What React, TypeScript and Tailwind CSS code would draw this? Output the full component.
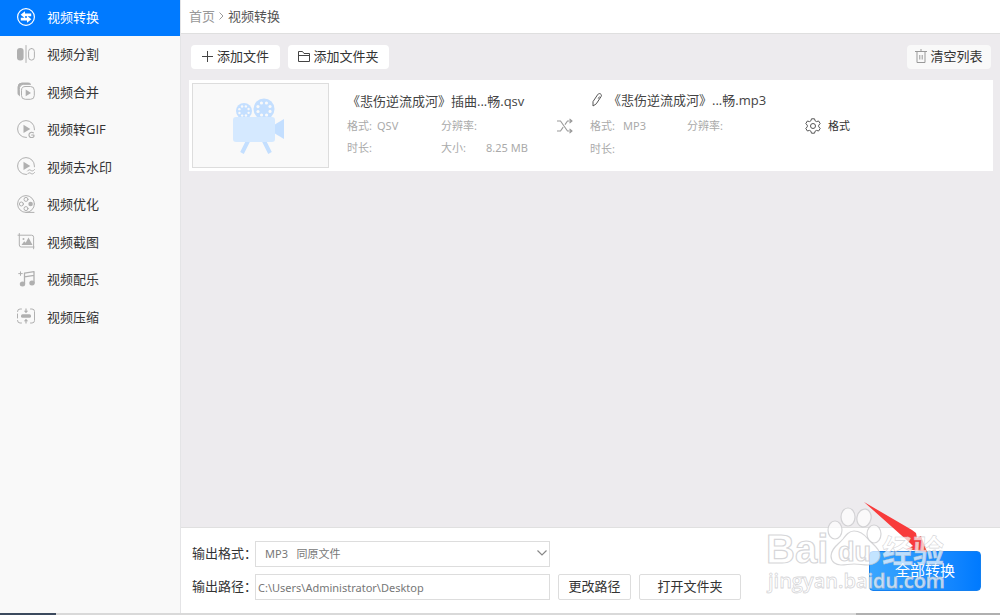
import { useState, type ReactNode } from "react";

// Sidebar glyphs share one 18x18 box and inherit the text colour.
function Glyph({ children }: { children: ReactNode }) {
  return (
    <svg
      viewBox="0 0 18 18"
      className="mb-0.5 size-[18px] shrink-0"
      fill="none"
      stroke="currentColor"
      strokeWidth="1"
      strokeLinecap="round"
      strokeLinejoin="round"
      aria-hidden="true"
    >
      {children}
    </svg>
  );
}

const CLIP = "M9.5 17.4H9A8.4 8.4 0 1 1 17.4 9v.8";

const MENU: { label: string; icon: ReactNode }[] = [
  {
    label: "视频转换",
    icon: (
      <Glyph>
        <circle cx="9" cy="9" r="8.4" strokeWidth="1.2" />
        <path d="M14.200 8.200V5.600H8V3.300L3.600 6.800 8 10.200V8.200zM3.800 9.800v2.600H10v2.300l4.400-3.500L10 7.800v2z" fill="currentColor" stroke="none" />
      </Glyph>
    ),
  },
  {
    label: "视频分割",
    icon: (
      <Glyph>
        <rect x="0" y="3" width="6.6" height="12.6" rx="3" fill="currentColor" stroke="none" />
        <path d="M9 .5v17" />
        <rect x="11.6" y="3.5" width="5.8" height="11.6" rx="2.9" />
      </Glyph>
    ),
  },
  {
    label: "视频合并",
    icon: (
      <Glyph>
        <path d="M2.200 13.500C1.300 12.800 1 12 1 11V5a4 4 0 0 1 4-4h6c1.200 0 2 .4 2.700 1.300H6.800A4.500 4.500 0 0 0 2.300 6.800z" fill="currentColor" />
        <rect x="4.500" y="4.500" width="12.800" height="12.800" rx="3.800" />
        <path d="M8.700 7.500v6.800l5.300-3.400z" fill="currentColor" stroke="none" />
      </Glyph>
    ),
  },
  {
    label: "视频转GIF",
    icon: (
      <Glyph>
        <path d={CLIP} />
        <path d="M6.500 4.800v8.200L13.300 9z" fill="currentColor" stroke="none" />
        <path d="M16.300 12.800a2.700 2.700 0 1 0 .6 3.700v-1.500h-2.200" strokeWidth="1.200" />
      </Glyph>
    ),
  },
  {
    label: "视频去水印",
    icon: (
      <Glyph>
        <path d={CLIP} />
        <path d="M6.500 4.800v8.200L13.300 9z" fill="currentColor" stroke="none" />
        <path d="M10.500 14c1.200-1.600 2.300-1.400 3.400-.6s2.200.8 3.600-.8M10.500 17c1.200-1.600 2.300-1.400 3.400-.6s2.200.8 3.600-.8" />
      </Glyph>
    ),
  },
  {
    label: "视频优化",
    icon: (
      <Glyph>
        <circle cx="9" cy="9" r="8.400" />
        <circle cx="9" cy="4.400" r="2" />
        <circle cx="4.400" cy="9" r="2" />
        <circle cx="9" cy="13.600" r="2" />
        <circle cx="13.600" cy="9" r="2.300" fill="currentColor" stroke="none" />
        <path d="M9 17.400h8" />
      </Glyph>
    ),
  },
  {
    label: "视频截图",
    icon: (
      <Glyph>
        <path d="M1 3.200h13.600a2 2 0 0 1 2 2v11.600M2.300 1.500v11.500a2 2 0 0 0 2 2H17" />
        <path d="M4.500 13l2.700-3.700 1.500 1.400L11.500 5.500l4 7.500z" fill="currentColor" stroke="none" />
        <circle cx="6.500" cy="7" r="1" fill="currentColor" stroke="none" />
      </Glyph>
    ),
  },
  {
    label: "视频配乐",
    icon: (
      <Glyph>
        <path d="M7.500 14V3.200l9.500-1.500V13M7.500 6.800L17 5.300" strokeWidth="1.300" />
        <ellipse cx="5.500" cy="14" rx="2.700" ry="2.500" fill="currentColor" stroke="none" />
        <ellipse cx="15" cy="13" rx="2.700" ry="2.500" fill="currentColor" stroke="none" />
        <path d="M3.500 1.800v3.600M1.700 3.600h3.600" />
      </Glyph>
    ),
  },
  {
    label: "视频压缩",
    icon: (
      <Glyph>
        <path d="M4.500 2H3a2.500 2.500 0 0 0-2.500 2.500M.5 7v4M.5 13.500A2.500 2.500 0 0 0 3 16h1.500M13.500 2H15a2.500 2.500 0 0 1 2.500 2.500v9A2.500 2.500 0 0 1 15 16h-1.500" />
        <rect x="4" y="7.300" width="10" height="3.400" rx="1.500" fill="currentColor" stroke="none" />
        <path d="M8.400 1.500h1.200v2.200h1.600L9 6.200 6.800 3.700h1.600zM8.400 16.500h1.200v-2.200h1.600L9 11.800l-2.200 2.500h1.600z" fill="currentColor" stroke="none" />
      </Glyph>
    ),
  },
];

function Reel({ cx, cy, r }: { cx: number; cy: number; r: number }) {
  return (
    <>
      <circle cx={cx} cy={cy} r={r} fill="#c4dfff" />
      {[0, 45, 90, 135, 180, 225, 270, 315].map((deg) => (
        <circle
          key={deg}
          cx={cx + r * 0.62 * Math.cos(((deg + 22) * Math.PI) / 180)}
          cy={cy + r * 0.62 * Math.sin(((deg + 22) * Math.PI) / 180)}
          r={r * 0.15}
          fill="#f9f9f9"
        />
      ))}
    </>
  );
}

function Camera() {
  return (
    <svg viewBox="0 0 52 56" className="mr-1 h-14 w-[52px]" aria-hidden="true">
      <path d="M15 43L9 55M31 43l6 12" stroke="#c4dfff" strokeWidth="4" />
      <Reel cx={11} cy={13} r={8} />
      <Reel cx={31} cy={11} r={10.5} />
      <path d="M41 27l10-6v20l-10-6z" fill="#c4dfff" />
      <rect x="0" y="19" width="42" height="25" rx="3" fill="#d5e9ff" />
    </svg>
  );
}

function Watermark() {
  return (
    <svg
      viewBox="764 500 190 100"
      className="pointer-events-none absolute right-[46px] bottom-[13px] h-[100px] w-[190px]"
      aria-hidden="true"
    >
      <path d="M864 502L912 530l4 3 1 5 4-2 6 16-21-3 7-3-3-3z" fill="#f83b3b" />
      <g fill="#ffffff" fillOpacity=".7" stroke="#c4c4c8" strokeOpacity=".7" strokeWidth="1.2">
        <ellipse cx="835" cy="530" rx="7" ry="9" />
        <ellipse cx="848" cy="517" rx="7" ry="9" />
        <ellipse cx="864" cy="518" rx="7" ry="9" transform="rotate(12 864 518)" />
        <ellipse cx="874" cy="534" rx="7" ry="9" />
        <path d="M854 531c-5 0-8 4-11 8-4 5-12 9-12 17 0 6 5 9 10 9 5 0 8-1 13-1s9 1 14 1 12-3 12-10c0-7-8-11-12-16s-8-8-14-8z" />
        <g fontFamily="'Liberation Sans', 'Noto Sans CJK SC', sans-serif" fontWeight="700">
          <text x="766" y="563" fontSize="40">Bai</text>
          <text x="838" y="561" fontSize="27">du</text>
          <text x="882" y="562" fontSize="31" strokeWidth=".6">经验</text>
        </g>
        <text x="768" y="588" fontSize="20" fontWeight="600" fontFamily="'Open Sans', sans-serif" strokeWidth=".8">
          jingyan.baidu.com
        </text>
      </g>
    </svg>
  );
}

function MediaRow() {
  return (
    <article className="flex bg-white p-[3px] font-['Noto_Sans','Noto_Sans_CJK_SC',sans-serif] text-[11px] leading-4 text-[#aaa]">
      <div className="flex h-[85px] w-[137px] shrink-0 items-center justify-center border border-[#ddd] bg-[#f9f9f9]">
        <Camera />
      </div>

      <div className="ml-[18px] w-[210px] shrink-0 pt-2">
        <h2 className="font-['Open_Sans','Noto_Sans_CJK_SC',sans-serif] text-[13px] leading-5 text-[#444]">
          《悲伤逆流成河》插曲...畅.qsv
        </h2>
        <dl className="mt-[7px] grid grid-cols-[30px_64px_45px_1fr] gap-y-1.5 whitespace-nowrap">
          <dt>格式:</dt>
          <dd>QSV</dd>
          <dt>分辨率:</dt>
          <dd />
          <dt>时长:</dt>
          <dd />
          <dt>大小:</dt>
          <dd>8.25 MB</dd>
        </dl>
      </div>

      <svg viewBox="0 0 16 16" className="size-4 shrink-0 self-center" fill="none" stroke="#999" strokeWidth="1.1" aria-hidden="true">
        <path d="M0 3h3.500l7 10H15M0 13h3.500l2.700-3.900M8 6.600L10.500 3H15M12.500 .8L15 3l-2.500 2.200M12.500 10.800L15 13l-2.500 2.200" />
      </svg>

      <div className="ml-[17px] w-[215px] shrink-0 pt-[7px]">
        <div className="flex items-center gap-1">
          <button type="button" aria-label="重命名" className="text-[#555]">
            <svg viewBox="0 0 14 14" className="size-3.5" fill="none" stroke="currentColor" aria-hidden="true">
              <path d="M3 8.600L7.700 1.600c.8-1.100 1.800-1.300 2.800-.7s1.200 1.700.5 2.800L6.300 10.800 3 13zM8.200 5.600l1.300-2" strokeLinejoin="round" />
            </svg>
          </button>
          <h2 className="font-['Open_Sans','Noto_Sans_CJK_SC',sans-serif] text-[13px] leading-5 text-[#444]">
            《悲伤逆流成河》...畅.mp3
          </h2>
        </div>
        <dl className="mt-2 grid grid-cols-[33px_64px_45px_1fr] gap-y-[7px] whitespace-nowrap">
          <dt>格式:</dt>
          <dd>MP3</dd>
          <dt>分辨率:</dt>
          <dd />
          <dt>时长:</dt>
          <dd />
        </dl>
      </div>

      <button type="button" className="flex items-center gap-[7px] self-center text-[#333]">
        <svg viewBox="0 0 16 16" className="size-4" fill="none" stroke="#555" strokeLinejoin="round" aria-hidden="true">
          <path d="M6.500 .8h3l.6 2 1.400.8 2.100-.6 1.600 2.600L13.700 7.200v1.600l1.500 1.600-1.600 2.600-2.100-.6-1.400.8-.6 2h-3l-.6-2-1.400-.8-2.100.6L.8 10.400l1.500-1.600V7.200L.8 5.600 2.400 3l2.100.6 1.400-.8z" />
          <circle cx="8" cy="8" r="2.500" />
        </svg>
        格式
      </button>
    </article>
  );
}

export default function App() {
  const [active, setActive] = useState("视频转换");
  const [path, setPath] = useState("C:\\Users\\Administrator\\Desktop");

  return (
    <div className="flex min-h-screen flex-col bg-white font-['Open_Sans','Noto_Sans_CJK_SC',sans-serif] text-[13px] text-[#333]">
      <div className="flex flex-1">
        <nav className="w-[181px] shrink-0 border-r border-[#e4e4e6] bg-[#f9f9f9]">
          <ul className="grid h-[336px] grid-rows-[36px] auto-rows-fr">
            {MENU.map((item) => (
              <li key={item.label}>
                <button
                  type="button"
                  onClick={() => setActive(item.label)}
                  className={
                    "flex h-full w-full items-center gap-3 pl-[17px] text-left " +
                    (active === item.label ? "bg-[#007aff] text-white" : "text-[#b0b0b0]")
                  }
                >
                  {item.icon}
                  <span className={active === item.label ? "text-white" : "text-[#333]"}>{item.label}</span>
                </button>
              </li>
            ))}
          </ul>
        </nav>

        <div className="flex min-w-0 flex-1 flex-col">
          <header className="flex h-[34px] items-center gap-1 border-b border-[#dfdfdf] bg-white pl-2 text-[#555]">
            <a href="#home" className="text-[#999]">首页</a>
            <svg viewBox="0 0 5 8" className="mb-0.5 h-2 w-[5px]" fill="none" stroke="#999" aria-hidden="true">
              <path d="M.5 .5L4 4 .5 7.500" />
            </svg>
            <span>视频转换</span>
          </header>

          <main className="flex-1 bg-[#edebee] pt-[11px] pr-[7px] pl-2">
            <div className="mb-[11px] flex gap-2 px-0.5">
              <button type="button" className="flex h-6 w-[89px] items-center justify-center gap-1 rounded bg-white">
                <svg viewBox="0 0 11 11" className="mb-0.5 size-[11px]" stroke="#444" aria-hidden="true">
                  <path d="M5.500 0v11M0 5.500h11" />
                </svg>
                添加文件
              </button>
              <button type="button" className="flex h-6 w-[101px] items-center justify-center gap-[3px] rounded bg-white">
                <svg viewBox="0 0 12 11" className="mb-0.5 h-[11px] w-3" fill="none" stroke="#444" aria-hidden="true">
                  <path d="M.5 .5h4l1.500 2h5.500v8H.5zM.5 4.500h11" />
                </svg>
                添加文件夹
              </button>
              <button type="button" className="ml-auto flex h-6 w-[84px] items-center justify-center gap-[3px] rounded bg-[#f9f9f9]">
                <svg viewBox="0 0 12 14" className="mb-0.5 h-3.5 w-3" fill="none" stroke="#999" aria-hidden="true">
                  <path d="M0 2.500h12M6 0v2.500M2 2.500v11h8v-11M4.800 6v4.500M7.200 6v4.500" />
                </svg>
                清空列表
              </button>
            </div>
            <MediaRow />
          </main>

          <footer className="relative flex items-center border-t border-[#e0e0e0] bg-white py-[13px] pr-[19px] pl-[11px]">
            <div className="grid grid-cols-[63px_295px_auto] items-center gap-y-[7px] whitespace-nowrap">
              <label htmlFor="format">输出格式：</label>
              <div className="relative">
                <select
                  id="format"
                  className="block h-[26px] w-full appearance-none border border-[#ddd] bg-white pl-[9px] font-['Noto_Sans','Noto_Sans_CJK_SC',sans-serif] text-[11px] text-[#777]"
                >
                  <option>MP3&nbsp;&nbsp; 同原文件</option>
                </select>
                <svg
                  viewBox="0 0 10 6"
                  className="pointer-events-none absolute top-[9px] right-[3px] h-1.5 w-2.5"
                  fill="none"
                  stroke="#888"
                  strokeWidth="1.2"
                  aria-hidden="true"
                >
                  <path d="M.5 .5L5 5 9.500 .5" />
                </svg>
              </div>
              <span />
              <label htmlFor="path">输出路径：</label>
              <input
                id="path"
                value={path}
                onChange={(e) => setPath(e.target.value)}
                className="h-[26px] w-full border border-[#ddd] bg-white pl-0.5 font-['Noto_Sans','Noto_Sans_CJK_SC',sans-serif] text-[11px] text-[#777]"
              />
              <div className="flex gap-2 pl-2">
                <button type="button" className="h-[26px] w-[73px] rounded-xs border border-[#ddd]">更改路径</button>
                <button type="button" className="h-[26px] w-[102px] rounded-xs border border-[#ddd]">打开文件夹</button>
              </div>
            </div>
            <button
              type="button"
              className="ml-auto h-10 w-28 rounded border border-[#1480f0] bg-linear-to-r from-[#38a6ff] to-[#007aff] text-[15px] text-white"
            >
              全部转换
            </button>
            <Watermark />
          </footer>
        </div>
      </div>
      <div className="flex h-0.5 bg-[#d9d9d9]">
        <div className="w-14 bg-[#3c4a5e]" />
        <div className="ml-auto w-36 bg-[#b0b0b0]" />
      </div>
    </div>
  );
}
